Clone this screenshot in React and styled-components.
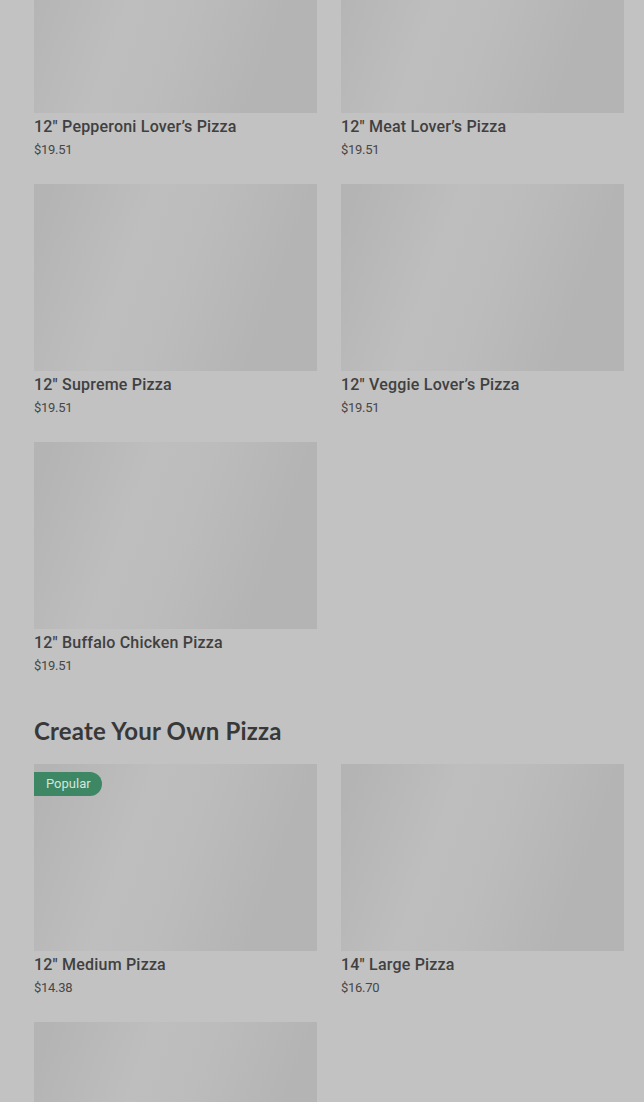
import styled, { createGlobalStyle } from 'styled-components';

const GlobalStyle = createGlobalStyle`
    html, body {
        margin: 0;
        padding: 0;
        background: #c2c2c2;
        overflow: hidden;
    }
`;

const sections = [
    {
        items: [
            { name: '12" Pepperoni Lover\u2019s Pizza', price: '$19.51' },
            { name: '12" Meat Lover\u2019s Pizza', price: '$19.51' },
            { name: '12" Supreme Pizza', price: '$19.51' },
            { name: '12" Veggie Lover\u2019s Pizza', price: '$19.51' },
            { name: '12" Buffalo Chicken Pizza', price: '$19.51' },
        ],
    },
    {
        title: 'Create Your Own Pizza',
        items: [
            { name: '12" Medium Pizza', price: '$14.38', badge: 'Popular' },
            { name: '14" Large Pizza', price: '$16.70' },
            { name: '16" Extra Large Pizza', price: '$18.99' },
        ],
    },
];

function App() {
    return (
        <>
            <GlobalStyle />
            <Page>
                {sections.map((section, i) => (
                    <Section key={i}>
                        {section.title && <SectionTitle>{section.title}</SectionTitle>}
                        <Grid>
                            {section.items.map((item) => (
                                <Card key={item.name}>
                                    <Photo>
                                        {item.badge && <Badge>{item.badge}</Badge>}
                                    </Photo>
                                    <Name>{item.name}</Name>
                                    <Price>{item.price}</Price>
                                </Card>
                            ))}
                        </Grid>
                    </Section>
                ))}
            </Page>
        </>
    );
}

const Page = styled.main`
    margin-top: -74px;
    padding: 0 20px 40px 34px;
    font-family: Roboto, 'Liberation Sans', sans-serif;
    color: #3a3a3a;
`;

const Section = styled.section`
    margin-bottom: 41px;
`;

const SectionTitle = styled.h2`
    margin: 0 0 19px;
    font-family: Lato, 'Open Sans', sans-serif;
    font-size: 24px;
    font-weight: 700;
    line-height: 28px;
    color: #383838;
    letter-spacing: 0.2px;
`;

const Grid = styled.div`
    display: grid;
    grid-template-columns: repeat(2, 1fr);
    column-gap: 24px;
    row-gap: 24px;
`;

const Card = styled.article`
    display: flex;
    flex-direction: column;
`;

const Photo = styled.div`
    position: relative;
    height: 187px;
    background: linear-gradient(
        110deg,
        #b4b4b4 5%,
        #bebebe 35%,
        #bcbcbc 52%,
        #b4b4b4 80%
    );
`;

const Badge = styled.span`
    position: absolute;
    top: 8px;
    left: 0;
    padding: 0 11px 0 12px;
    height: 24px;
    line-height: 24px;
    border-radius: 0 12px 12px 0;
    background: #3d8764;
    color: #d3e6db;
    font-size: 13px;
`;

const Name = styled.h3`
    margin: 3px 0 0;
    font-size: 16px;
    font-weight: 500;
    line-height: 22px;
    color: #404040;
    letter-spacing: 0.2px;
`;

const Price = styled.p`
    margin: 2px 0 0;
    font-size: 13px;
    line-height: 20px;
    color: #474747;
    letter-spacing: -0.3px;
`;

export default App;
